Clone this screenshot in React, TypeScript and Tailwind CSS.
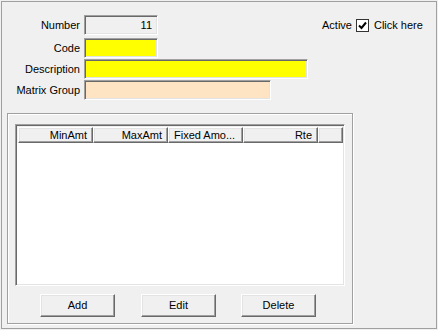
import React from "react";

const sunken =
  "border border-t-[#a0a0a0] border-l-[#a0a0a0] border-r-white border-b-white shadow-[inset_1px_1px_0_#696969,inset_-1px_-1px_0_#e3e3e3]";

const raised =
  "border border-t-white border-l-white border-r-[#696969] border-b-[#696969] shadow-[inset_-1px_-1px_0_#a0a0a0,inset_1px_1px_0_#e3e3e3]";

type FieldProps = {
  label: string;
  width: string;
  bg: string;
  value?: string;
  top: string;
};

const Field: React.FC<FieldProps> = ({ label, width, bg, value, top }) => (
  <div className={`flex h-[20px] items-center ${top}`}>
    <span className="w-[78px] text-right">{label}</span>
    <div
      className={`ml-[4px] flex h-[20px] items-center justify-end pr-[5px] ${width} ${bg} ${sunken}`}
    >
      {value}
    </div>
  </div>
);

const columns = [
  { name: "MinAmt", align: "text-right" },
  { name: "MaxAmt", align: "text-right" },
  { name: "Fixed Amo...", align: "text-left" },
  { name: "Rte", align: "text-right" },
];

const App: React.FC = () => {
  return (
    <div className="h-[330px] w-[438px] bg-[#f0f0f0] p-px font-['Liberation_Sans',Arial,sans-serif] text-[11px] leading-none text-black">
      <div className="h-[328px] w-[436px] border border-[#a0a0a0]">
        <div className="flex">
          <div className="flex w-[308px] flex-col pt-[13px]">
            <Field label="Number" width="w-[74px]" bg="bg-[#f0f0f0]" value="11" top="" />
            <Field label="Code" width="w-[74px]" bg="bg-[#ffff00]" top="mt-[3px]" />
            <Field label="Description" width="w-[224px]" bg="bg-[#ffff00]" top="mt-[1px]" />
            <Field label="Matrix Group" width="w-[187px]" bg="bg-[#ffe4c4]" top="mt-[1px]" />
          </div>
          <div className="ml-[12px] mt-[13px] flex h-[20px] items-center">
            <span>Active</span>
            <span className="ml-[4px] flex h-[13px] w-[13px] items-center justify-center border border-[#333333] bg-white">
              <svg width="9" height="9" viewBox="0 0 9 9">
                <path d="M1 4.5 L3.5 7 L8 1.5" fill="none" stroke="#000" strokeWidth="2" />
              </svg>
            </span>
            <span className="ml-[5px]">Click here</span>
          </div>
        </div>

        <div className="ml-[5px] mt-[13px] h-[211px] w-[346px] border border-[#a0a0a0] shadow-[inset_1px_1px_0_#ffffff,1px_1px_0_#ffffff]">
          <div className={`ml-[7px] mt-[10px] h-[162px] w-[330px] bg-white p-px ${sunken}`}>
            <div className="flex h-[17px] bg-[#f0f0f0] pl-px pt-px">
              {columns.map((c) => (
                <div
                  key={c.name}
                  className={`h-[16px] w-[75px] px-[5px] pt-[2px] ${c.align} ${raised}`}
                >
                  {c.name}
                </div>
              ))}
              <div className={`h-[16px] flex-1 ${raised}`} />
            </div>
          </div>
          <div className="ml-[32px] mt-[8px] flex">
            <button className={`h-[23px] w-[75px] bg-[#f0f0f0] ${raised}`}>Add</button>
            <button className={`ml-[26px] h-[23px] w-[75px] bg-[#f0f0f0] ${raised}`}>Edit</button>
            <button className={`ml-[25px] h-[23px] w-[75px] bg-[#f0f0f0] ${raised}`}>Delete</button>
          </div>
        </div>
      </div>
    </div>
  );
};

export default App;
